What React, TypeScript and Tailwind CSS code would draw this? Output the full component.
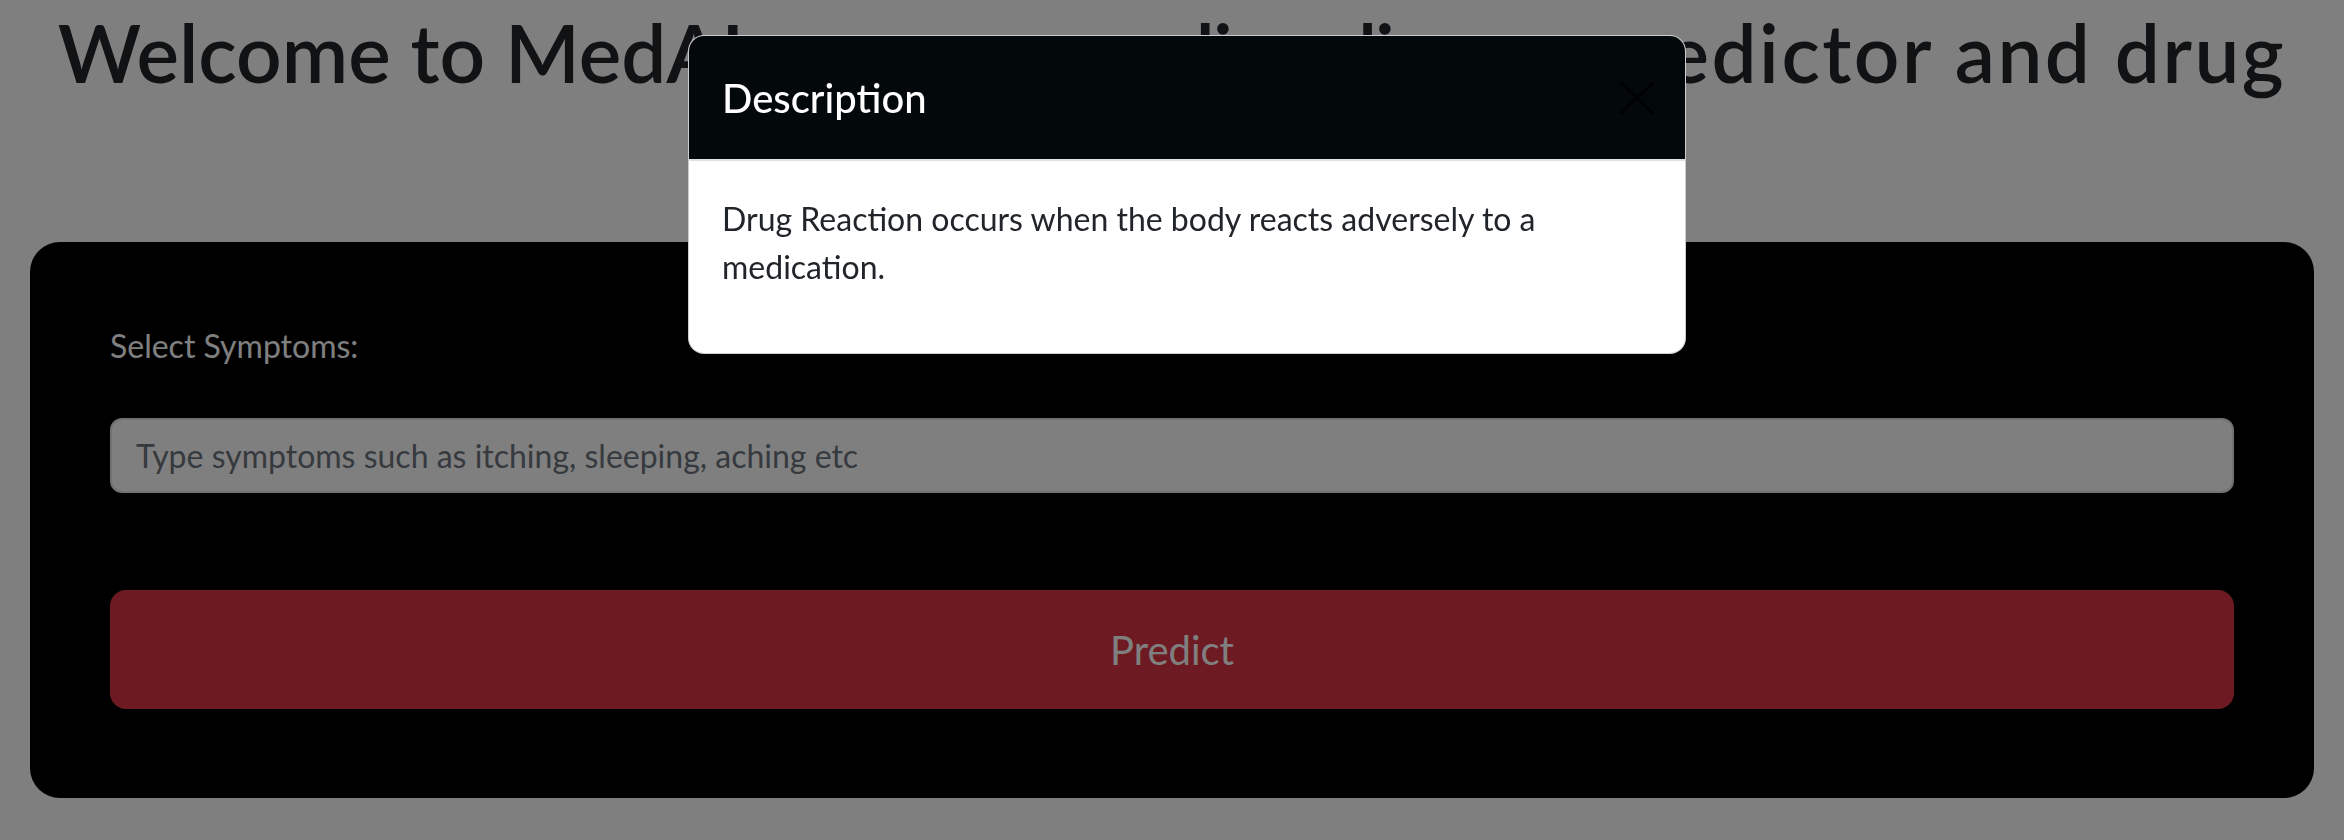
import React from "react";

function CloseIcon() {
  return (
    <svg width="34" height="32" viewBox="0 0 34 32" fill="none" aria-hidden="true">
      <path d="M1 1L33 31M33 1L1 31" stroke="#000" strokeWidth="2.5" strokeLinecap="round" />
    </svg>
  );
}

export default function App() {
  return (
    <div className="relative min-h-[840px] overflow-hidden bg-white font-['Lato','Open_Sans',sans-serif]">
      {/* Page */}
      <h1 className="mt-[4px] whitespace-nowrap text-center text-[80px] font-semibold leading-[96px] text-[#212529]">
        Welcome to MedA<span className="tracking-[-2px]">I, your own online disease pr</span>
        <span className="tracking-[2.5px]">edictor and drug</span>
      </h1>

      <div className="mx-[30px] mt-[142px] rounded-[30px] bg-black px-[80px] pt-[80px] pb-[89px]">
        <label className="block text-[32px] leading-[48px] text-white">Select Symptoms:</label>
        <input
          type="text"
          placeholder="Type symptoms such as itching, sleeping, aching etc"
          className="mt-[48px] block h-[75px] w-full rounded-[12px] border-2 border-[#dee2e6] bg-white px-[24px] text-[32px] text-[#212529] outline-none placeholder:text-[#6c757d]"
        />
        <button className="mt-[97px] block h-[119px] w-full rounded-[16px] bg-[#dc3545] text-[40px] text-white">
          Predict
        </button>
      </div>

      {/* Backdrop */}
      <div className="fixed inset-0 bg-black/50" />

      {/* Modal */}
      <div className="fixed inset-0 flex justify-center pl-[30px]">
        <div className="mt-[35px] h-fit w-[998px] overflow-hidden rounded-[16px] border border-black/20 bg-white">
          <div className="flex h-[125px] items-center justify-between border-b-2 border-[#dee2e6] bg-[#03080a] pl-[33px] pr-[31px]">
            <h5 className="text-[40px] font-medium leading-[48px] text-white">Description</h5>
            <button className="flex items-center justify-center opacity-90">
              <CloseIcon />
            </button>
          </div>
          <div className="px-[33px] pt-[34px] pb-[30px]">
            <p className="mb-[32px] text-[32px] leading-[48px] text-[#212529]">
              Drug Reaction occurs when the body reacts adversely to a medication.
            </p>
          </div>
        </div>
      </div>
    </div>
  );
}
